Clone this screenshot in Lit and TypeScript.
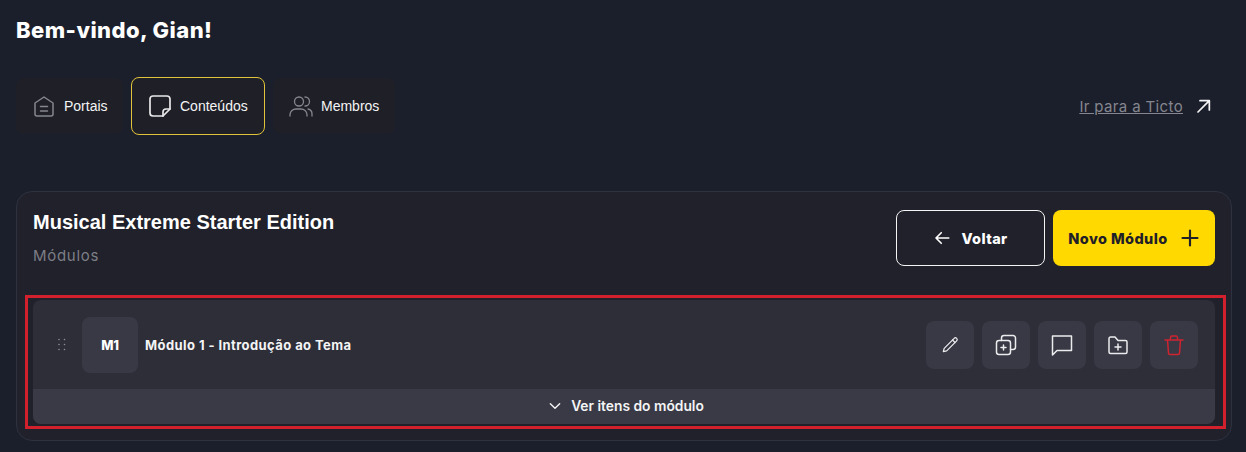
import { LitElement, html, css, svg } from "lit";
import { customElement } from "lit/decorators.js";

const icon = (size: number, body: unknown, sw = 1.5) => html`<svg width=${size} height=${size} viewBox="0 0 24 24" fill="none" stroke="currentColor" stroke-width=${sw} stroke-linecap="round" stroke-linejoin="round">${body}</svg>`;

@customElement("app-root")
export class AppRoot extends LitElement {
  static styles = css`
    :host { display: block; width: 1246px; height: 452px; overflow: hidden; background: #1b1f2b; font-family: "Inter", sans-serif; color: #fff; box-sizing: border-box; padding: 0 14px 0 16px; }
    * { box-sizing: border-box; }
    h1 { margin: 0; padding-top: 16px; height: 77px; font-size: 22px; line-height: 28px; font-weight: 800; letter-spacing: .45px; }
    .nav { display: flex; align-items: flex-start; height: 58px; gap: 8px; }
    .tab { display: flex; align-items: center; height: 56px; margin-top: 1px; gap: 8px; padding: 0 16px; background: #1f2027; border-radius: 8px; font: 14px "Liberation Sans", sans-serif; color: #f4f4f5; }
    .tab svg { color: #85868f; flex: none; }
    .tab.active { height: 58px; margin-top: 0; border: 1px solid #e0c33a; }
    .tab.active svg { color: #e8e8ea; }
    .tab.p { width: 107px; }
    .tab.c { width: 134px; }
    .tab.m { width: 122px; }
    .link { margin-left: auto; display: flex; align-items: center; height: 58px; gap: 13px; padding-right: 20px; font-size: 15px; color: #85868f; letter-spacing: .36px; }
    .link span { text-decoration: underline; }
    .link svg { color: #f4f4f5; }
    .card { margin-top: 56px; width: 1216px; height: 250px; border: 1px solid #2e3240; border-radius: 16px; background: #20212a; padding: 17px 16px 0 16px; }
    .head { display: flex; justify-content: space-between; height: 86px; }
    h2 { margin: 0; font: bold 20px/26px "Liberation Sans", sans-serif; }
    .sub { margin-top: 11px; font-size: 15px; line-height: 20px; color: #7d7e86; letter-spacing: .7px; }
    .btns { display: flex; gap: 8px; padding-top: 1px; height: 57px; }
    .btn { height: 56px; border-radius: 8px; display: flex; align-items: center; justify-content: center; font-size: 14.500px; font-weight: 800; letter-spacing: .4px; }
    .back { width: 149px; border: 1px solid #f4f4f5; color: #fff; gap: 10px; }
    .new { width: 162px; background: #ffd900; color: #1f2028; gap: 12px; }
    .mark { margin-left: -8px; width: 1201px; height: 134px; border: 3px solid #d2202c; padding: 2px 8px 2px 5px; }
    .item { height: 124px; width: 1182px; border-radius: 8px; overflow: hidden; background: #2d2e38; display: flex; flex-direction: column; }
    .row { height: 89px; display: flex; align-items: center; padding: 0 17px 0 25px; }
    .grip { color: #8e8f98; display: flex; width: 24px; }
    .thumb { width: 56px; height: 56px; background: #383944; border-radius: 8px; display: flex; align-items: center; justify-content: center; font-size: 13px; font-weight: 800; letter-spacing: -.3px; }
    .title { margin-left: 7px; font-size: 13px; font-weight: 700; letter-spacing: .42px; color: #f4f4f5; }
    .acts { margin-left: auto; display: flex; gap: 8px; }
    .act { width: 48px; height: 48px; border-radius: 8px; background: #383944; display: flex; align-items: center; justify-content: center; color: #ececee; }
    .act.del { color: #cf2330; }
    .more { flex: 1; background: #393a45; display: flex; align-items: center; justify-content: center; gap: 9px; padding: 0 0 2px 4px; font-size: 13.800px; font-weight: 600; color: #f4f4f5; }
  `;

  render() {
    return html`
      <h1>Bem-vindo, Gian!</h1>
      <div class="nav">
        <div class="tab p">${icon(24, svg`<path d="M3 9 12 3l9 6v11a2 2 0 0 1-2 2H5a2 2 0 0 1-2-2z"/><path d="M8.500 12.500h7M8.500 17h7"/>`)}<span>Portais</span></div>
        <div class="tab active c">${icon(24, svg`<path d="M22 15V5a3 3 0 0 0-3-3H5a3 3 0 0 0-3 3v14a3 3 0 0 0 3 3h10z"/><path d="M15 22v-4a3 3 0 0 1 3-3h4"/>`, 1.7)}<span>Conteúdos</span></div>
        <div class="tab m">${icon(24, svg`<circle cx="10" cy="7.500" r="4.500"/><path d="M1 22v-1.500A6 6 0 0 1 7 15h5a6 6 0 0 1 6 5.500V22"/><path d="M16 3a4.500 4.500 0 0 1 0 9M19 15a5 5 0 0 1 4 5v2"/>`, 1.3)}<span>Membros</span></div>
        <div class="link"><span>Ir para a Ticto</span>${icon(16, svg`<path d="M3 21 20 4M6 4h14v14"/>`, 2.600)}</div>
      </div>
      <div class="card">
        <div class="head">
          <div><h2>Musical Extreme Starter Edition</h2><div class="sub">Módulos</div></div>
          <div class="btns">
            <div class="btn back">${icon(18, svg`<path d="M21 12H4M11 5l-7 7 7 7"/>`, 2.200)}<span>Voltar</span></div>
            <div class="btn new"><span>Novo Módulo</span>${icon(20, svg`<path d="M12 3v18M3 12h18"/>`, 2.600)}</div>
          </div>
        </div>
        <div class="mark">
          <div class="item">
            <div class="row">
              <div class="grip"><svg width="8" height="13" viewBox="0 0 8 13" fill="currentColor"><circle cx="1" cy="1.500" r=".8"/><circle cx="6.500" cy="1.500" r=".8"/><circle cx="1" cy="6.500" r=".8"/><circle cx="6.500" cy="6.500" r=".8"/><circle cx="1" cy="11.500" r=".8"/><circle cx="6.500" cy="11.500" r=".8"/></svg></div>
              <div class="thumb">M1</div>
              <div class="title">Módulo 1 - Introdução ao Tema</div>
              <div class="acts">
                <div class="act">${icon(20, svg`<path d="M4 20l1-4L17 4a2 2 0 0 1 3 3L8 19z"/><path d="M15 6l3 3"/>`)}</div>
                <div class="act">${icon(24, svg`<rect x="2.500" y="7.500" width="14" height="14" rx="2.500"/><path d="M7.500 7.500V5a2.500 2.500 0 0 1 2.500-2.500h9A2.500 2.500 0 0 1 21.500 5v9a2.500 2.500 0 0 1-2.500 2.500h-2.500"/><path d="M9.500 12v5M7 14.500h5"/>`)}</div>
                <div class="act">${icon(24, svg`<path d="M2.500 3h19v14.500H7l-4.500 4.500z"/>`)}</div>
                <div class="act">${icon(24, svg`<path d="M3 5.500A1.500 1.500 0 0 1 4.500 4H9l3 3.500h7.500A1.500 1.500 0 0 1 21 9v10a1.500 1.500 0 0 1-1.500 1.500h-15A1.500 1.500 0 0 1 3 19z"/><path d="M12 11v6M9 14h6"/>`)}</div>
                <div class="act del">${icon(24, svg`<path d="M3 7h18M5.500 7l1 13a1.500 1.500 0 0 0 1.500 1.500h8a1.500 1.500 0 0 0 1.500-1.500l1-13M8.500 7V4.500A1.500 1.500 0 0 1 10 3h4a1.500 1.500 0 0 1 1.500 1.500V7"/>`)}</div>
              </div>
            </div>
            <div class="more">${icon(14, svg`<path d="M4 8l8 8 8-8"/>`, 2.400)}<span>Ver itens do módulo</span></div>
          </div>
        </div>
      </div>
    `;
  }
}
